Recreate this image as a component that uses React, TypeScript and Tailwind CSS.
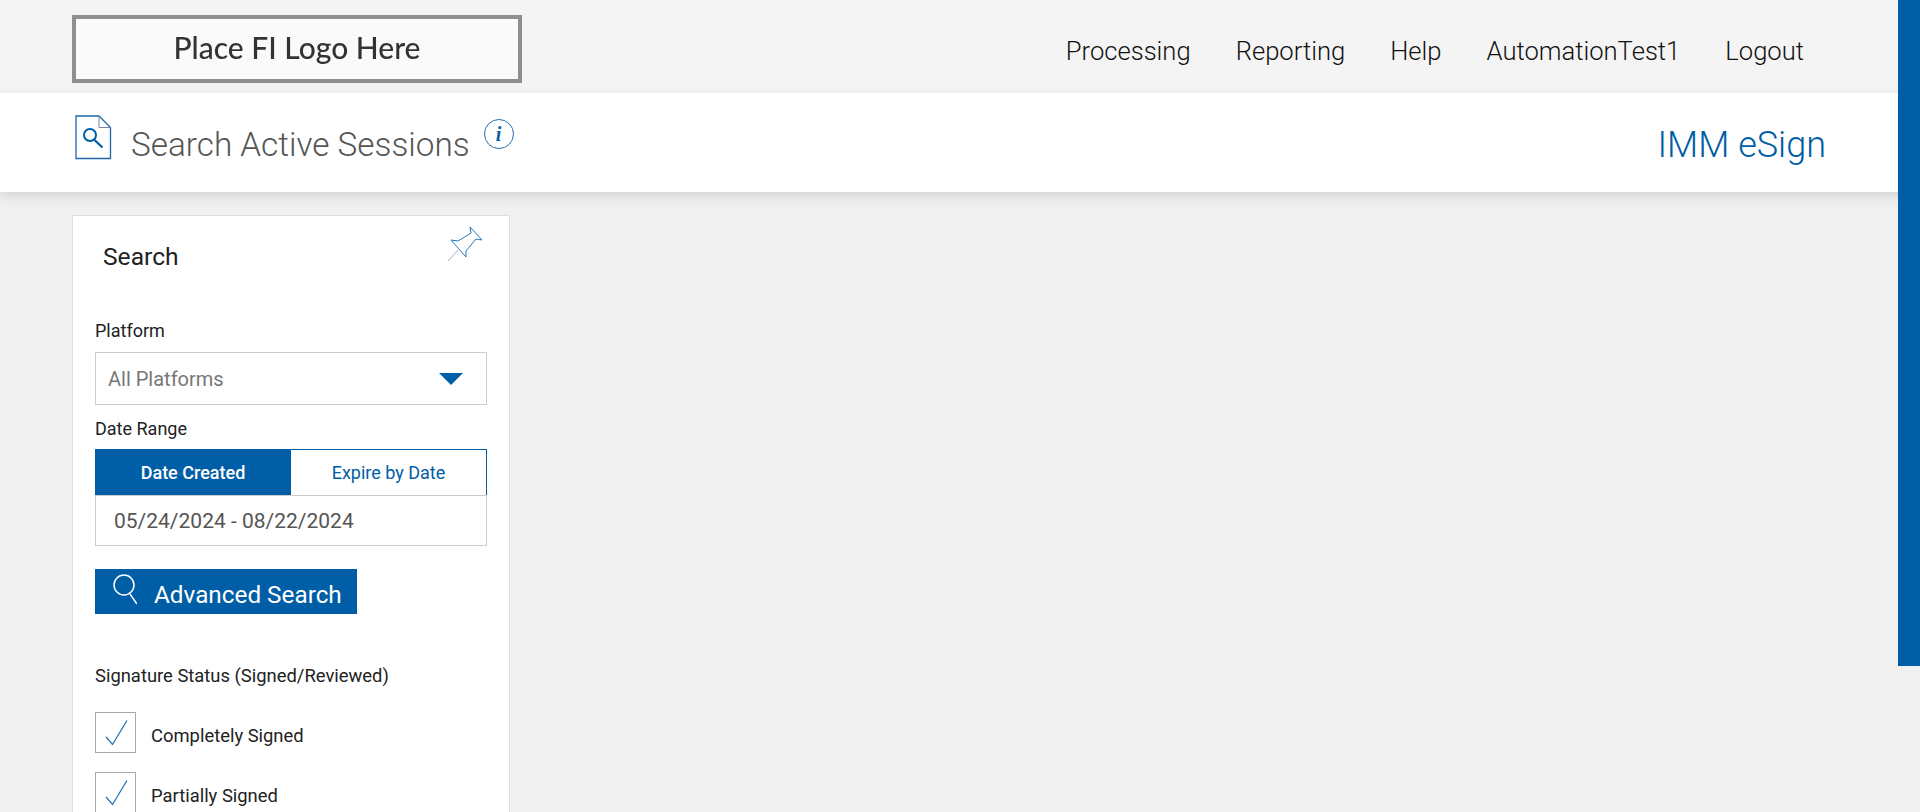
import React from "react";

const roboto = "font-['Roboto',sans-serif]";

function Check() {
  return (
    <div className="w-[41px] h-[41px] border border-[#a9a9a9] shrink-0 flex items-center justify-center">
      <svg width="24" height="28" viewBox="0 0 24 28" fill="none">
        <path d="M2 18 L8.5 25.5 L23 1.5" stroke="#2a74b8" strokeWidth="1.3" />
      </svg>
    </div>
  );
}

function CheckRow({ label }: { label: string }) {
  return (
    <div className="flex items-center gap-[15px] h-[41px]">
      <Check />
      <span className="text-[18.4px] text-[#222] leading-none mt-[8px]">{label}</span>
    </div>
  );
}

export default function App() {
  return (
    <div className={`relative h-[812px] overflow-hidden bg-[#f0f0f0] ${roboto}`}>
      <header className="h-[93px] bg-[#f4f4f4] flex items-start justify-between pl-[72px] pr-[116px]">
        <div className="w-[450px] h-[68px] mt-[15px] border-[4px] border-[#8f8f8f] bg-[#fafafa] flex items-center justify-center">
          <span className="font-['Lato',sans-serif] font-medium text-[30px] leading-none text-[#333] pb-[4px] blur-[0.4px]">Place FI Logo Here</span>
        </div>
        <nav className="flex items-center gap-[45px] h-[93px] text-[25.6px] font-light text-[#111] pt-[10px]">
          <span>Processing</span>
          <span>Reporting</span>
          <span>Help</span>
          <span>AutomationTest1</span>
          <span>Logout</span>
        </nav>
      </header>

      <div className="relative h-[99px] bg-white shadow-[0_4px_12px_rgba(0,0,0,0.12)] flex items-start pl-[75px] pr-[94px]">
        <svg className="mt-[22px] shrink-0" width="37" height="45" viewBox="0 0 37 45" fill="none">
          <path d="M1 1 H24 L35.5 12.5 V43.5 H1 Z" stroke="#1f66a8" strokeWidth="1.3" />
          <path d="M24 1 V12.5 H35.5" stroke="#7d7fb5" strokeWidth="1" />
          <circle cx="15" cy="20" r="6" stroke="#005ea6" strokeWidth="2" />
          <path d="M19.5 25 L27.5 32.5" stroke="#005ea6" strokeWidth="2.2" />
        </svg>
        <h1 className="ml-[19px] mt-[30px] text-[33.3px] leading-[44px] font-light text-[#555]">Search Active Sessions</h1>
        <div className="ml-[14px] mt-[26px] w-[30px] h-[30px] rounded-full border border-[#2d6fa8] flex items-center justify-center font-['Liberation_Serif',serif] italic font-bold text-[20px] text-[#005ea6] leading-none">
          i
        </div>
        <div className="ml-auto mt-[30px] text-[36px] leading-[44px] font-light text-[#005ea6]">IMM eSign</div>
      </div>

      <main className="pl-[72px] pt-[23px]">
        <section className="w-[438px] h-[640px] bg-white border border-[#dedede] pl-[22px] pr-[22px]">
          <div className="relative pt-[26px]">
            <h2 className="pl-[8px] text-[24.6px] leading-[30px] text-[#222]">Search</h2>
            <svg className="absolute right-[4px] top-[10px]" width="36" height="36" viewBox="0 0 36 36" fill="none">
              <path d="M23 1 L35 14 L29 13 L19 25 L19 31 L4 14 L11 15 L24 7 Z" stroke="#2a74b8" strokeWidth="1" fill="white" />
              <path d="M11 24 L1 35" stroke="#b9a9c8" strokeWidth="1" />
            </svg>
          </div>

          <label className="block mt-[49px] text-[18px] leading-[20px] text-[#222]">Platform</label>
          <div className="mt-[11px] h-[53px] border border-[#cccccc] flex items-center justify-between pl-[12px] pr-[23px]">
            <span className="text-[20px] text-[#777]">All Platforms</span>
            <svg width="24" height="12" viewBox="0 0 24 12">
              <path d="M0 0 H24 L12 12 Z" fill="#005ea6" />
            </svg>
          </div>

          <label className="block mt-[14px] text-[18px] leading-[20px] text-[#222]">Date Range</label>
          <div className="mt-[10px] flex h-[46px]">
            <div className="w-[196px] bg-[#005ea6] text-white text-[18px] font-medium flex items-center justify-center">Date Created</div>
            <div className="w-[196px] bg-white border border-[#005ea6] border-l-0 border-b-0 text-[#005ea6] text-[18px] flex items-center justify-center">Expire by Date</div>
          </div>
          <div className="h-[51px] border border-[#cccccc] flex items-center pl-[18px] pt-[3px] text-[21px] text-[#555]">
            05/24/2024 - 08/22/2024
          </div>

          <button className="mt-[23px] w-[262px] h-[45px] bg-[#005ea6] text-white flex items-center pl-[17px] gap-[17px]">
            <svg className="mb-[4px]" width="25" height="31" viewBox="0 0 25 31" fill="none">
              <circle cx="12" cy="11" r="10" stroke="white" strokeWidth="1.5" />
              <path d="M18 20 L25 30" stroke="white" strokeWidth="1.5" />
            </svg>
            <span className="text-[24.3px] leading-none mt-[8px]">Advanced Search</span>
          </button>

          <div className="mt-[51px] text-[18.4px] leading-[22px] text-[#222]">Signature Status (Signed/Reviewed)</div>
          <div className="mt-[25px] flex flex-col gap-[19px]">
            <CheckRow label="Completely Signed" />
            <CheckRow label="Partially Signed" />
          </div>
        </section>
      </main>

      <div className="absolute top-0 right-0 w-[22px] h-[666px] bg-[#005ea6]" />
    </div>
  );
}
